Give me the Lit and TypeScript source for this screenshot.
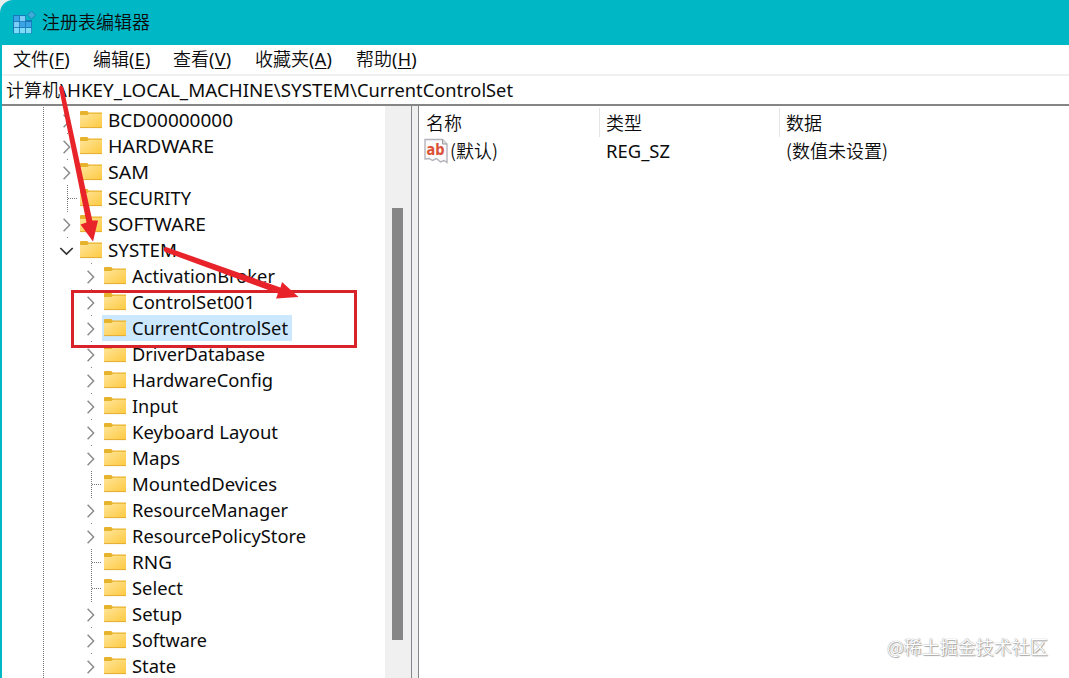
import { LitElement, html, svg, css, nothing } from "lit";
import { customElement } from "lit/decorators.js";
import { classMap } from "lit/directives/class-map.js";

interface Node {
  name: string;
  level: 1 | 2;
  kind: "closed" | "open" | "leaf";
  width: number;
}

const NODES: Node[] = [
  { name: "BCD00000000", level: 1, kind: "closed", width: 125 },
  { name: "HARDWARE", level: 1, kind: "closed", width: 106 },
  { name: "SAM", level: 1, kind: "closed", width: 41 },
  { name: "SECURITY", level: 1, kind: "leaf", width: 83 },
  { name: "SOFTWARE", level: 1, kind: "closed", width: 98 },
  { name: "SYSTEM", level: 1, kind: "open", width: 69 },
  { name: "ActivationBroker", level: 2, kind: "closed", width: 143 },
  { name: "ControlSet001", level: 2, kind: "closed", width: 123 },
  { name: "CurrentControlSet", level: 2, kind: "closed", width: 156 },
  { name: "DriverDatabase", level: 2, kind: "closed", width: 133 },
  { name: "HardwareConfig", level: 2, kind: "closed", width: 141 },
  { name: "Input", level: 2, kind: "closed", width: 46 },
  { name: "Keyboard Layout", level: 2, kind: "closed", width: 146 },
  { name: "Maps", level: 2, kind: "closed", width: 48 },
  { name: "MountedDevices", level: 2, kind: "leaf", width: 145 },
  { name: "ResourceManager", level: 2, kind: "closed", width: 156 },
  { name: "ResourcePolicyStore", level: 2, kind: "closed", width: 174 },
  { name: "RNG", level: 2, kind: "leaf", width: 40 },
  { name: "Select", level: 2, kind: "leaf", width: 51 },
  { name: "Setup", level: 2, kind: "closed", width: 50 },
  { name: "Software", level: 2, kind: "closed", width: 75 },
  { name: "State", level: 2, kind: "closed", width: 44 },
];

const MENUS: [string, string, number][] = [
  ["文件", "F", 80],
  ["编辑", "E", 80],
  ["查看", "V", 82],
  ["收藏夹", "A", 101],
  ["帮助", "H", 80],
];

/* One line of text whose advance is spread to a known width. */
@customElement("fit-text")
export class FitText extends LitElement {
  static properties = { text: {}, width: { type: Number } };
  declare text: string;
  declare width: number;
  static styles = css`
    :host { display: block; height: 26px; }
    svg { display: block; overflow: visible; height: 26px; }
    text { fill: #0c0c0c; }
  `;
  render() {
    return html`<svg width=${this.width}>
      <text x="0" y="19" textLength=${this.width} lengthAdjust="spacingAndGlyphs">${this.text}</text>
    </svg>`;
  }
}

@customElement("reg-tree")
export class RegTree extends LitElement {
  static styles = css`
    :host { display: block; position: relative; overflow: hidden; width: 383px; flex: none; background: #fff; }
    .guide { position: absolute; left: 41px; top: 1px; bottom: 0; width: 1px;
      background: repeating-linear-gradient(#777 0 1px, transparent 1px 2px); }
    .rows { padding-top: 1px; }
    .row { display: flex; height: 26px; padding-left: 53px; }
    .row.l2 { padding-left: 77px; }
    .twist { width: 23px; height: 26px; flex: none; }
    .item { display: flex; height: 26px; padding: 0 4px 0 2px; gap: 5px; }
    .item.sel { background: #cce8ff; }
    .item fit-text { box-sizing: border-box; padding-top: 1px; }
    .folder { width: 23px; height: 26px; flex: none; }
  `;

  private twist(n: Node, i: number) {
    return html`<svg class="twist" viewBox="0 0 23 26">
      ${n.kind === "leaf"
        ? svg`<path d="M12.5 0V26" stroke="#777" stroke-dasharray="1 1"/><path d="M13 13.5H23" stroke="#777" stroke-dasharray="1 1"/>`
        : nothing}
      ${n.kind === "closed"
        ? svg`<path d="M8.6 7.8L14.6 14L8.600 20.2" fill="none" stroke="#8c8c8c" stroke-width="1.5"/>`
        : nothing}
      ${n.kind === "open"
        ? svg`<path d="M5.3 11L11.5 17L17.7 11" fill="none" stroke="#303030" stroke-width="1.7"/>`
        : nothing}
      ${i > 0 && n.kind !== "leaf" ? svg`<rect x="12" y="0" width="1" height="1" fill="#888"/>` : nothing}
    </svg>`;
  }

  private folder() {
    return html`<svg class="folder" viewBox="0 0 23 26">
      <defs><linearGradient id="g" x1="0" y1="0" x2="1" y2="1">
        <stop offset="0" stop-color="#ffe59a"/><stop offset="1" stop-color="#fdc93f"/>
      </linearGradient></defs>
      <path d="M0 5Q0 4 1 4H7Q8 4 8.6 5.6H22V9H0Z" fill="#e8b32c"/>
      <path d="M0 8H7.5L8.7 6.8H22V21H0Z" fill="url(#g)"/>
      <path d="M0 20.6H22" stroke="#e2a92e" stroke-width=".9"/>
    </svg>`;
  }

  render() {
    return html`<div class="guide"></div>
      <div class="rows">
        ${NODES.map((n, i) => html`<div class=${classMap({ row: true, l2: n.level === 2 })}>
          ${this.twist(n, i)}
          <div class=${classMap({ item: true, sel: n.name === "CurrentControlSet" })}>
            ${this.folder()}<fit-text .text=${n.name} .width=${n.width}></fit-text>
          </div>
        </div>`)}
      </div>`;
  }
}

@customElement("app-root")
export class AppRoot extends LitElement {
  static styles = css`
    :host { display: block; position: relative; width: 1069px; height: 678px; overflow: hidden; background: #e9eeee;
      font: 18px/26px "Noto Sans", "Noto Sans CJK SC", sans-serif; color: #0c0c0c; }
    .cjk { font-family: "Noto Sans CJK SC", sans-serif; font-weight: 350; }
    .window { display: flex; flex-direction: column; box-sizing: border-box; height: 678px;
      background: #00b7c5; border-top-left-radius: 13px; padding-left: 2px; }
    .title { display: flex; height: 45px; flex: none; align-items: center; padding-left: 10px; gap: 5px; }
    .title svg { width: 25px; height: 25px; margin-top: 1px; }
    .title span { padding-bottom: 3px; }
    .menu { display: flex; height: 29px; flex: none; padding-left: 11px; background: #fff; line-height: 27px;
      border-bottom: 2px solid #f0f0f0; }
    .menu div { flex: none; white-space: nowrap; }
    .menu u { text-underline-offset: 2px; text-decoration-thickness: 1px; }
    .menu i { font-style: normal; font-family: "Noto Sans"; font-weight: 400; letter-spacing: .3px; }
    .address { display: flex; height: 28px; flex: none; background: #fff; padding-left: 4px; line-height: 26px; border-bottom: 2px solid #858585; }
    .address fit-text { padding-top: 2px; }
    .body { display: flex; flex: 1; min-height: 0; background: #fff; }
    .scroll { width: 26px; flex: none; background: #f0f0f0; display: flex; justify-content: center; padding-top: 102px; box-sizing: border-box; }
    .thumb { width: 11px; height: 432px; margin-right: 1px; background: #868686; }
    .split { width: 6px; flex: none; background: #f0f0f0; border-left: 1px solid #85878c; border-right: 1px solid #85878c; }
    .list { display: grid; grid-template-columns: 181px 180px 1fr; grid-template-rows: 31px 29px; flex: 1; align-content: start; }
    .head { box-sizing: border-box; padding: 2px 0 0 6px; border-right: 1px solid #e4e4e4; height: 29px; margin-top: 2px; line-height: 24px; }
    .head:first-child { padding-left: 7px; }
    .head:nth-child(3) { border: 0; }
    .cell { display: flex; padding: 1px 0 0 6px; line-height: 25px; }
    .cell.name { padding-left: 5px; gap: 1px; }
    .cell fit-text { padding-top: 1px; font-family: "Noto Sans"; font-weight: 400; }
    .cell svg { width: 25px; height: 26px; overflow: visible; }
    .ab { font: bold 15px/15px "DejaVu Sans", sans-serif; fill: #dc5037; }
    .marks { position: absolute; left: 0; top: 0; }
    .watermark { position: absolute; left: 887px; top: 633px; color: #fff; white-space: nowrap;
      text-shadow: 0 0 1px #777, 1px 1px 1px #aaa; }
  `;

  private regIcon() {
    return html`<svg viewBox="0 0 25 25">
      <path d="M1 4H14V9H20V22.500H1Z" fill="#1678b8"/>
      ${[0, 1, 2].map((r) => [0, 1, 2].map((c) => r === 0 && c === 2 ? nothing :
        svg`<rect x=${2 + c * 6} y=${5 + r * 6} width="5.2" height="5.2" fill=${r === 2 ? "#7cdcf8" : c === r || c === 2 ? "#3aa4e4" : "#7cccf6"}/>`))}
      <path d="M19.5 0L23.700 4L19.500 8L15.300 4Z" fill="#3eacd6" stroke="#1583b4" stroke-width="1"/>
    </svg>`;
  }

  render() {
    return html`<div class="window">
        <div class="title cjk">${this.regIcon()}<span>注册表编辑器</span></div>
        <div class="menu cjk">
          ${MENUS.map(([t, k, w]) => html`<div style="width:${w}px">${t}<i>(<u>${k}</u>)</i></div>`)}
        </div>
        <div class="address"><span class="cjk">计算机</span><fit-text .text=${"\\HKEY_LOCAL_MACHINE\\SYSTEM\\"} .width=${297}></fit-text><fit-text .text=${"CurrentControlSet"} .width=${156}></fit-text></div>
        <div class="body">
          <reg-tree></reg-tree>
          <div class="scroll"><div class="thumb"></div></div>
          <div class="split"></div>
          <div class="list cjk">
            <div class="head">名称</div><div class="head">类型</div><div class="head">数据</div>
            <div class="cell name">
              <svg viewBox="0 0 25 26">
                <path d="M1 1.5H18.500L23 6V24.500L20 22.500L16.500 24L12.500 20.500L8.500 22.500L5 20.500L1 21Z" fill="#fafafa" stroke="#b3b3bb" stroke-width="1.4"/>
                <path d="M18.5 1.5V6H23" fill="#ddd" stroke="#999"/>
                <text class="ab" x="2.5" y="16.5" textLength="18" lengthAdjust="spacingAndGlyphs">ab</text>
              </svg><span>(默认)</span>
            </div>
            <div class="cell"><fit-text .text=${"REG_SZ"} .width=${64}></fit-text></div>
            <div class="cell">(数值未设置)</div>
          </div>
        </div>
      </div>
      <svg class="marks" width="1069" height="678">
        <rect x="72.5" y="291.5" width="283" height="55" fill="none" stroke="#d8232a" stroke-width="3"/>
        <path d="M59 88Q59.500 85.500 61 85.500Q63 85.500 63.500 88L92.300 220.500L98 220.500L93 241.500L80.500 224.500L86.500 222.500Z" fill="#e8232a"/>
        <path d="M166 247L280.500 287.500L282 282L298.500 297L276 298.500L278 293.500L165 252Q161.500 248.500 166 247Z" fill="#e8232a"/>
      </svg>
      <div class="watermark cjk">@稀土掘金技术社区</div>`;
  }
}
